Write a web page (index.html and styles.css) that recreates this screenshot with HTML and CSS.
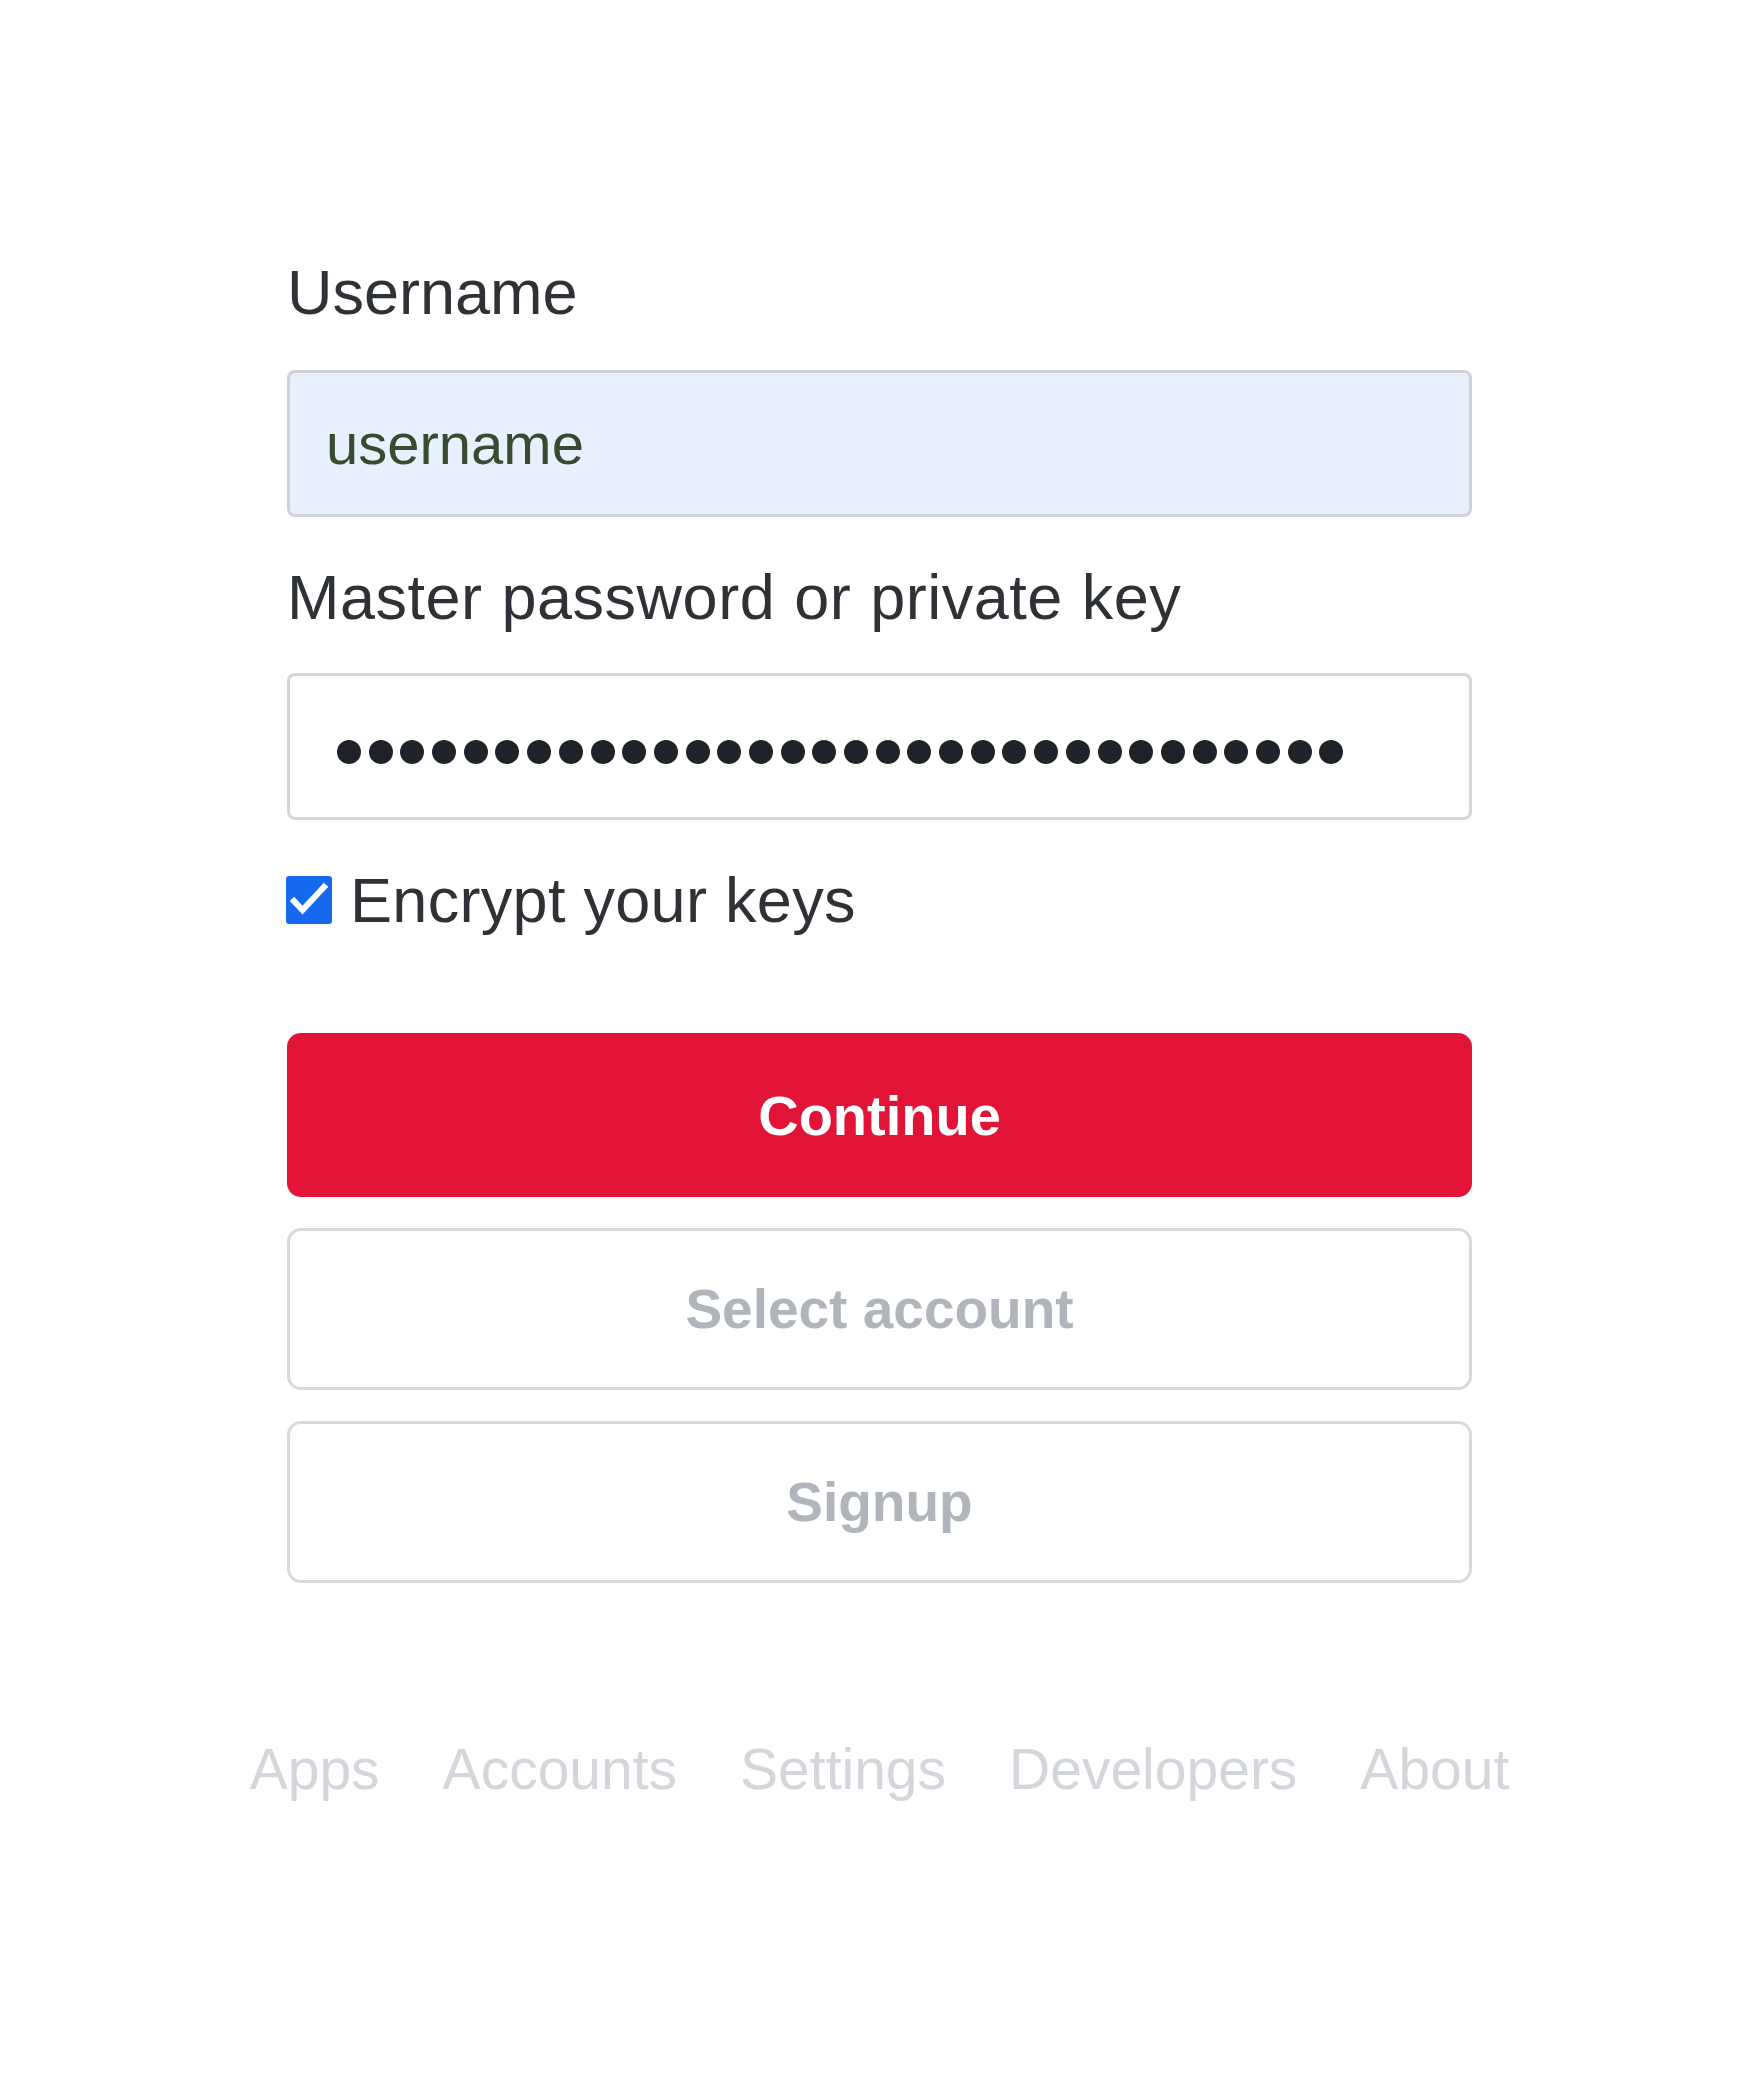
FILE: index.html
```html
<!DOCTYPE html>
<html lang="en">
<head>
<meta charset="utf-8">
<title>Login</title>
<link rel="stylesheet" href="styles.css">
</head>
<body>
<main class="page">
  <form class="login">
    <label class="field-label label-user" for="username">Username</label>
    <input class="text-input text-input--autofill" id="username" type="text" value="username">

    <label class="field-label label-pass" for="password">Master password or private key</label>
    <div class="text-input pass-input" id="password" role="textbox" aria-label="password">
      <div class="dots">
        <span class="dot"></span><span class="dot"></span><span class="dot"></span><span class="dot"></span>
        <span class="dot"></span><span class="dot"></span><span class="dot"></span><span class="dot"></span>
        <span class="dot"></span><span class="dot"></span><span class="dot"></span><span class="dot"></span>
        <span class="dot"></span><span class="dot"></span><span class="dot"></span><span class="dot"></span>
        <span class="dot"></span><span class="dot"></span><span class="dot"></span><span class="dot"></span>
        <span class="dot"></span><span class="dot"></span><span class="dot"></span><span class="dot"></span>
        <span class="dot"></span><span class="dot"></span><span class="dot"></span><span class="dot"></span>
        <span class="dot"></span><span class="dot"></span><span class="dot"></span><span class="dot"></span>
      </div>
    </div>

    <label class="check-row">
      <span class="checkbox">
        <svg viewBox="0 0 46 48" width="46" height="48"><polyline points="8,25 16.5,34 38,11" fill="none" stroke="#ffffff" stroke-width="6" stroke-linecap="square"/></svg>
      </span>
      <span class="check-label">Encrypt your keys</span>
    </label>

    <button type="button" class="btn btn-primary">Continue</button>
    <button type="button" class="btn btn-outline">Select account</button>
    <button type="button" class="btn btn-outline">Signup</button>
  </form>

  <nav class="footer-nav">
    <a href="#">Apps</a>
    <a href="#">Accounts</a>
    <a href="#">Settings</a>
    <a href="#">Developers</a>
    <a href="#">About</a>
  </nav>
</main>
</body>
</html>
```
FILE: styles.css
```css
html, body {
  background: #ffffff;
}
body {
  margin: 0;
  padding-left: 12px;
  font-family: "Liberation Sans", Arial, sans-serif;
}
.page {
  width: 1185px;
  margin: 0 auto;
  padding-top: 256px;
}
.login {
  display: flex;
  flex-direction: column;
}
.field-label {
  display: block;
  font-size: 63px;
  line-height: 72px;
  letter-spacing: 0.5px;
  word-spacing: 1px;
  color: #2e3236;
}
.label-user {
  margin-bottom: 42px;
  letter-spacing: 0;
}
.label-pass {
  margin-top: 44px;
  margin-bottom: 40px;
}
.text-input {
  display: block;
  box-sizing: border-box;
  width: 100%;
  height: 147px;
  margin: 0;
  border: 3px solid #d4d6d9;
  border-radius: 8px;
  padding: 0 36px;
  font-family: "Liberation Sans", Arial, sans-serif;
  font-size: 58px;
  color: #384b30;
  background: #ffffff;
  outline: none;
}
.text-input--autofill {
  background: #e8f0fe;
  border-color: #cfd3d8;
}
.pass-input {
  display: flex;
  align-items: center;
  padding: 11px 0 0 47px;
}
.dots {
  display: flex;
  gap: 7.7px;
}
.dot {
  width: 24px;
  height: 24px;
  border-radius: 50%;
  background: #1f2329;
}
.check-row {
  display: flex;
  align-items: center;
  height: 72px;
  margin-top: 44px;
  margin-left: -1px;
}
.checkbox {
  display: flex;
  width: 46px;
  height: 48px;
  border-radius: 3px;
  background: #1669ef;
}
.check-label {
  margin-left: 18px;
  font-size: 63px;
  line-height: 72px;
  letter-spacing: 0.3px;
  color: #2e3236;
}
.btn {
  display: flex;
  align-items: center;
  justify-content: center;
  box-sizing: border-box;
  width: 100%;
  height: 162px;
  margin: 31px 0 0;
  border-radius: 14px;
  font-family: "Liberation Sans", Arial, sans-serif;
  font-weight: 700;
  font-size: 55px;
  cursor: pointer;
}
.btn-primary {
  height: 164px;
  margin-top: 97px;
  border: 0;
  background: #e11437;
  color: #ffffff;
  font-size: 56px;
}
.btn-outline {
  border: 3px solid #d8d9db;
  background: #ffffff;
  color: #b0b5bb;
}
.footer-nav {
  display: flex;
  justify-content: center;
  gap: 63px;
  margin-top: 150px;
  font-size: 57px;
  line-height: 72px;
  white-space: nowrap;
}
.footer-nav a {
  color: #d3d6da;
  text-decoration: none;
}
```
